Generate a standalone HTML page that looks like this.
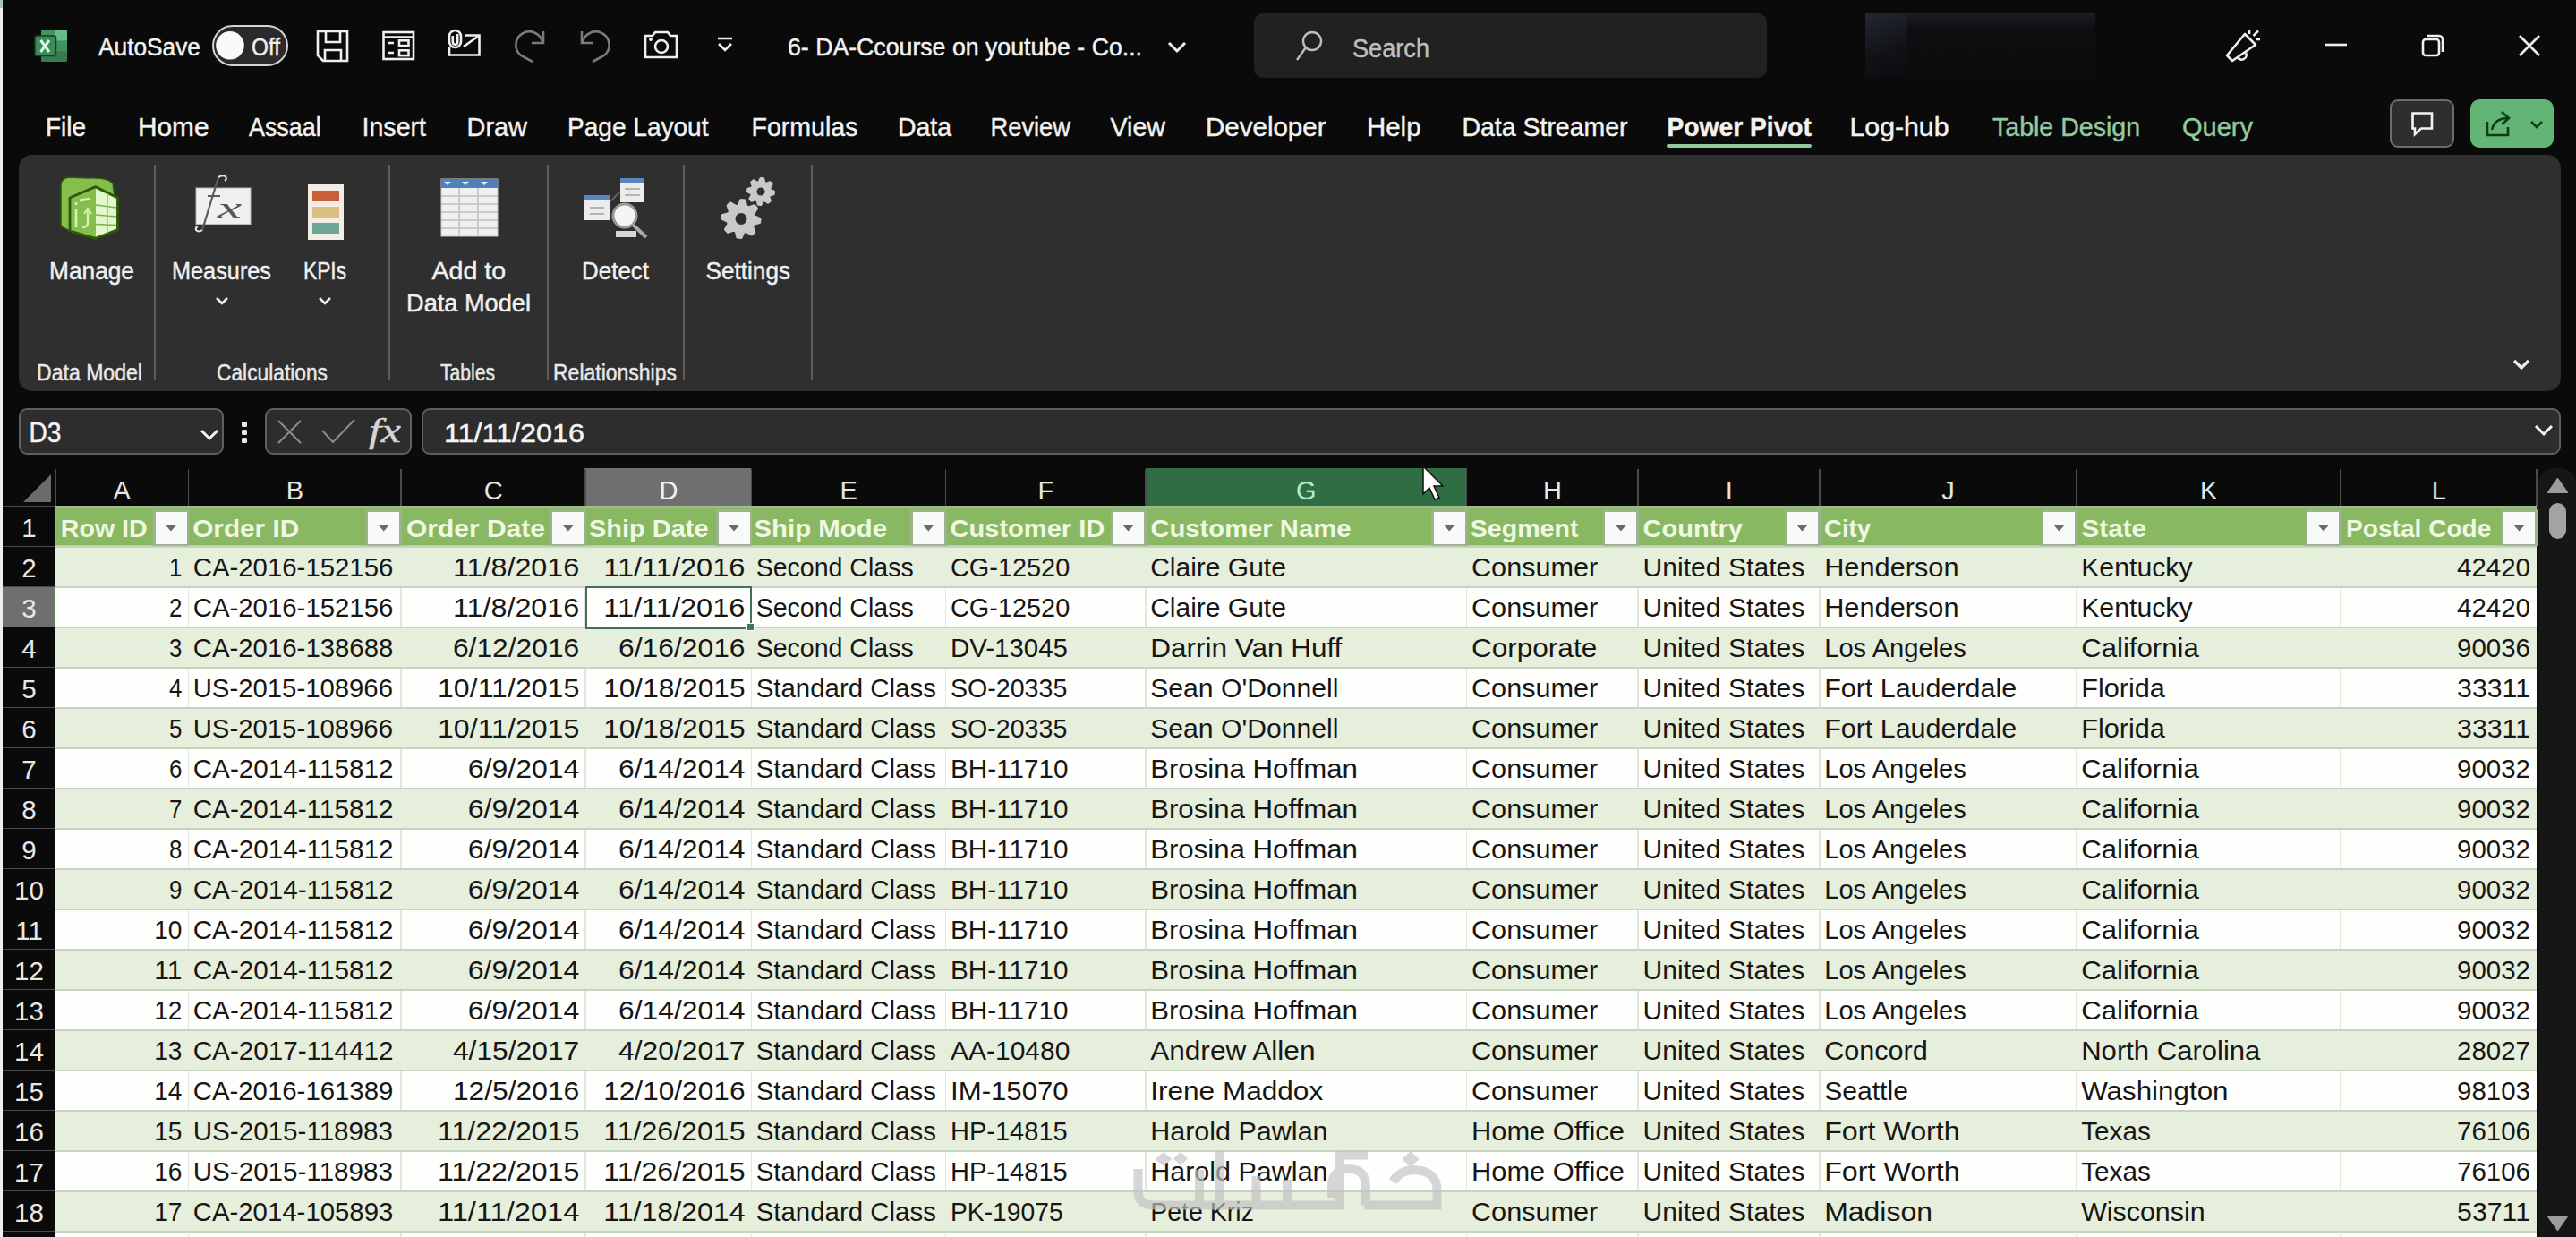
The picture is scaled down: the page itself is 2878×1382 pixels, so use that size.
<!DOCTYPE html>
<html><head><meta charset="utf-8"><title>Excel - Power Pivot</title>
<style>
html,body{margin:0;padding:0;background:#0a0a0a;}
body{width:2878px;height:1382px;position:relative;overflow:hidden;font-family:"Liberation Sans",sans-serif;}
svg text{font-family:"Liberation Sans",sans-serif;}
</style></head><body>
<div style="position:absolute;left:0px;top:0px;width:3px;height:1382px;background:#eeeeee"></div><div style="position:absolute;left:0px;top:0px;width:3px;height:9px;background:#a9c3cb"></div><div style="position:absolute;left:237px;top:28px;width:85px;height:46px;box-sizing:border-box;border:2.5px solid #d4d4d4;border-radius:23px;background:#2a2a2a"></div><div style="position:absolute;left:1401px;top:15px;width:573px;height:72px;background:#212121;border-radius:10px"></div><div style="position:absolute;left:2084px;top:15px;width:47px;height:72px;background:linear-gradient(160deg,#2a2e38 0%,#12141a 60%,#0c0c0e 100%);opacity:.8"></div><div style="position:absolute;left:2131px;top:15px;width:210px;height:72px;background:linear-gradient(180deg,#1d1e22 0%,#0f0f11 22%,#0b0b0c 100%)"></div><div style="position:absolute;left:1862px;top:161px;width:162px;height:4px;background:#90c89c;border-radius:2px"></div><div style="position:absolute;left:2670px;top:111px;width:72px;height:54px;box-sizing:border-box;border:2px solid #6c6c6c;border-radius:9px;background:#2e2e2e"></div><div style="position:absolute;left:2760px;top:111px;width:93px;height:54px;background:#63b575;border-radius:10px"></div><div style="position:absolute;left:21px;top:173px;width:2840px;height:264px;background:#2f2f2f;border-radius:15px"></div><div style="position:absolute;left:172px;top:184px;width:2px;height:240px;background:#5c5c5c"></div><div style="position:absolute;left:434px;top:184px;width:2px;height:240px;background:#5c5c5c"></div><div style="position:absolute;left:611px;top:184px;width:2px;height:240px;background:#5c5c5c"></div><div style="position:absolute;left:762.5px;top:184px;width:2px;height:240px;background:#5c5c5c"></div><div style="position:absolute;left:906px;top:184px;width:2px;height:240px;background:#5c5c5c"></div><div style="position:absolute;left:21px;top:456px;width:229px;height:52px;box-sizing:border-box;border:2px solid #5f5f5f;border-radius:9px;background:#2d2d2d"></div><div style="position:absolute;left:269.5px;top:471px;width:6.5px;height:6px;background:#e8e8e8;border-radius:1.5px"></div><div style="position:absolute;left:269.5px;top:480px;width:6.5px;height:6px;background:#e8e8e8;border-radius:1.5px"></div><div style="position:absolute;left:269.5px;top:488.5px;width:6.5px;height:6px;background:#e8e8e8;border-radius:1.5px"></div><div style="position:absolute;left:295.5px;top:456px;width:164px;height:52px;box-sizing:border-box;border:2px solid #5f5f5f;border-radius:9px;background:#2d2d2d"></div><div style="position:absolute;left:470.5px;top:456px;width:2390.5px;height:52px;box-sizing:border-box;border:2px solid #5f5f5f;border-radius:9px;background:#2d2d2d"></div><div style="position:absolute;left:653px;top:523px;width:186px;height:42.5px;background:#6f6f6f"></div><div style="position:absolute;left:653px;top:563.5px;width:186px;height:2px;background:#4f8a5f"></div><div style="position:absolute;left:1280px;top:523px;width:359px;height:42.5px;background:#2f6e45"></div><div style="position:absolute;left:61px;top:524px;width:1.5px;height:41.5px;background:#4a4a4a"></div><div style="position:absolute;left:209.5px;top:524px;width:1.5px;height:41.5px;background:#4a4a4a"></div><div style="position:absolute;left:447.2px;top:524px;width:1.5px;height:41.5px;background:#4a4a4a"></div><div style="position:absolute;left:653.3px;top:524px;width:1.5px;height:41.5px;background:#4a4a4a"></div><div style="position:absolute;left:838.5px;top:524px;width:1.5px;height:41.5px;background:#4a4a4a"></div><div style="position:absolute;left:1055.8px;top:524px;width:1.5px;height:41.5px;background:#4a4a4a"></div><div style="position:absolute;left:1279px;top:524px;width:1.5px;height:41.5px;background:#4a4a4a"></div><div style="position:absolute;left:1637.8px;top:524px;width:1.5px;height:41.5px;background:#4a4a4a"></div><div style="position:absolute;left:1829.4px;top:524px;width:1.5px;height:41.5px;background:#4a4a4a"></div><div style="position:absolute;left:2032px;top:524px;width:1.5px;height:41.5px;background:#4a4a4a"></div><div style="position:absolute;left:2319px;top:524px;width:1.5px;height:41.5px;background:#4a4a4a"></div><div style="position:absolute;left:2614.4px;top:524px;width:1.5px;height:41.5px;background:#4a4a4a"></div><div style="position:absolute;left:2833px;top:524px;width:1.5px;height:41.5px;background:#4a4a4a"></div><div style="position:absolute;left:3px;top:564.75px;width:59px;height:1.6px;background:#4a4a4a"></div><div style="position:absolute;left:3px;top:609.75px;width:59px;height:1.6px;background:#4a4a4a"></div><div style="position:absolute;left:3px;top:655.5px;width:59px;height:45px;background:#6f6f6f"></div><div style="position:absolute;left:59px;top:655.5px;width:3px;height:45px;background:#4f8a5f"></div><div style="position:absolute;left:3px;top:654.75px;width:59px;height:1.6px;background:#4a4a4a"></div><div style="position:absolute;left:3px;top:699.75px;width:59px;height:1.6px;background:#4a4a4a"></div><div style="position:absolute;left:3px;top:744.75px;width:59px;height:1.6px;background:#4a4a4a"></div><div style="position:absolute;left:3px;top:789.75px;width:59px;height:1.6px;background:#4a4a4a"></div><div style="position:absolute;left:3px;top:834.75px;width:59px;height:1.6px;background:#4a4a4a"></div><div style="position:absolute;left:3px;top:879.75px;width:59px;height:1.6px;background:#4a4a4a"></div><div style="position:absolute;left:3px;top:924.75px;width:59px;height:1.6px;background:#4a4a4a"></div><div style="position:absolute;left:3px;top:969.75px;width:59px;height:1.6px;background:#4a4a4a"></div><div style="position:absolute;left:3px;top:1014.75px;width:59px;height:1.6px;background:#4a4a4a"></div><div style="position:absolute;left:3px;top:1059.75px;width:59px;height:1.6px;background:#4a4a4a"></div><div style="position:absolute;left:3px;top:1104.75px;width:59px;height:1.6px;background:#4a4a4a"></div><div style="position:absolute;left:3px;top:1149.75px;width:59px;height:1.6px;background:#4a4a4a"></div><div style="position:absolute;left:3px;top:1194.75px;width:59px;height:1.6px;background:#4a4a4a"></div><div style="position:absolute;left:3px;top:1239.75px;width:59px;height:1.6px;background:#4a4a4a"></div><div style="position:absolute;left:3px;top:1284.75px;width:59px;height:1.6px;background:#4a4a4a"></div><div style="position:absolute;left:3px;top:1329.75px;width:59px;height:1.6px;background:#4a4a4a"></div><div style="position:absolute;left:3px;top:1374.75px;width:59px;height:1.6px;background:#4a4a4a"></div><div style="position:absolute;left:62px;top:565.5px;width:2772px;height:45px;background:#88b862"></div><div style="position:absolute;left:62px;top:565.0px;width:2772px;height:3px;background:#9ebb8b"></div><div style="position:absolute;left:62px;top:609.0px;width:2772px;height:2px;background:#b4cfa0"></div><div style="position:absolute;left:61.25px;top:565.5px;width:1.5px;height:45px;background:#98b585"></div><div style="position:absolute;left:209.75px;top:565.5px;width:1.5px;height:45px;background:#98b585"></div><div style="position:absolute;left:447.45px;top:565.5px;width:1.5px;height:45px;background:#98b585"></div><div style="position:absolute;left:653.55px;top:565.5px;width:1.5px;height:45px;background:#98b585"></div><div style="position:absolute;left:838.75px;top:565.5px;width:1.5px;height:45px;background:#98b585"></div><div style="position:absolute;left:1056.05px;top:565.5px;width:1.5px;height:45px;background:#98b585"></div><div style="position:absolute;left:1279.25px;top:565.5px;width:1.5px;height:45px;background:#98b585"></div><div style="position:absolute;left:1638.05px;top:565.5px;width:1.5px;height:45px;background:#98b585"></div><div style="position:absolute;left:1829.65px;top:565.5px;width:1.5px;height:45px;background:#98b585"></div><div style="position:absolute;left:2032.25px;top:565.5px;width:1.5px;height:45px;background:#98b585"></div><div style="position:absolute;left:2319.25px;top:565.5px;width:1.5px;height:45px;background:#98b585"></div><div style="position:absolute;left:2614.65px;top:565.5px;width:1.5px;height:45px;background:#98b585"></div><div style="position:absolute;left:62px;top:610.5px;width:2772px;height:45px;background:#e6eedc"></div><div style="position:absolute;left:62px;top:609.75px;width:2772px;height:1.75px;background:#c9d2c0"></div><div style="position:absolute;left:62px;top:655.5px;width:2772px;height:45px;background:#fefffd"></div><div style="position:absolute;left:62px;top:654.75px;width:2772px;height:1.75px;background:#c9d2c0"></div><div style="position:absolute;left:209.5px;top:656.5px;width:1.5px;height:44px;background:#e2e6df"></div><div style="position:absolute;left:447.2px;top:656.5px;width:1.5px;height:44px;background:#e2e6df"></div><div style="position:absolute;left:653.3px;top:656.5px;width:1.5px;height:44px;background:#e2e6df"></div><div style="position:absolute;left:838.5px;top:656.5px;width:1.5px;height:44px;background:#e2e6df"></div><div style="position:absolute;left:1055.8px;top:656.5px;width:1.5px;height:44px;background:#e2e6df"></div><div style="position:absolute;left:1279px;top:656.5px;width:1.5px;height:44px;background:#e2e6df"></div><div style="position:absolute;left:1637.8px;top:656.5px;width:1.5px;height:44px;background:#e2e6df"></div><div style="position:absolute;left:1829.4px;top:656.5px;width:1.5px;height:44px;background:#e2e6df"></div><div style="position:absolute;left:2032px;top:656.5px;width:1.5px;height:44px;background:#e2e6df"></div><div style="position:absolute;left:2319px;top:656.5px;width:1.5px;height:44px;background:#e2e6df"></div><div style="position:absolute;left:2614.4px;top:656.5px;width:1.5px;height:44px;background:#e2e6df"></div><div style="position:absolute;left:62px;top:700.5px;width:2772px;height:45px;background:#e6eedc"></div><div style="position:absolute;left:62px;top:699.75px;width:2772px;height:1.75px;background:#c9d2c0"></div><div style="position:absolute;left:62px;top:745.5px;width:2772px;height:45px;background:#fefffd"></div><div style="position:absolute;left:62px;top:744.75px;width:2772px;height:1.75px;background:#c9d2c0"></div><div style="position:absolute;left:209.5px;top:746.5px;width:1.5px;height:44px;background:#e2e6df"></div><div style="position:absolute;left:447.2px;top:746.5px;width:1.5px;height:44px;background:#e2e6df"></div><div style="position:absolute;left:653.3px;top:746.5px;width:1.5px;height:44px;background:#e2e6df"></div><div style="position:absolute;left:838.5px;top:746.5px;width:1.5px;height:44px;background:#e2e6df"></div><div style="position:absolute;left:1055.8px;top:746.5px;width:1.5px;height:44px;background:#e2e6df"></div><div style="position:absolute;left:1279px;top:746.5px;width:1.5px;height:44px;background:#e2e6df"></div><div style="position:absolute;left:1637.8px;top:746.5px;width:1.5px;height:44px;background:#e2e6df"></div><div style="position:absolute;left:1829.4px;top:746.5px;width:1.5px;height:44px;background:#e2e6df"></div><div style="position:absolute;left:2032px;top:746.5px;width:1.5px;height:44px;background:#e2e6df"></div><div style="position:absolute;left:2319px;top:746.5px;width:1.5px;height:44px;background:#e2e6df"></div><div style="position:absolute;left:2614.4px;top:746.5px;width:1.5px;height:44px;background:#e2e6df"></div><div style="position:absolute;left:62px;top:790.5px;width:2772px;height:45px;background:#e6eedc"></div><div style="position:absolute;left:62px;top:789.75px;width:2772px;height:1.75px;background:#c9d2c0"></div><div style="position:absolute;left:62px;top:835.5px;width:2772px;height:45px;background:#fefffd"></div><div style="position:absolute;left:62px;top:834.75px;width:2772px;height:1.75px;background:#c9d2c0"></div><div style="position:absolute;left:209.5px;top:836.5px;width:1.5px;height:44px;background:#e2e6df"></div><div style="position:absolute;left:447.2px;top:836.5px;width:1.5px;height:44px;background:#e2e6df"></div><div style="position:absolute;left:653.3px;top:836.5px;width:1.5px;height:44px;background:#e2e6df"></div><div style="position:absolute;left:838.5px;top:836.5px;width:1.5px;height:44px;background:#e2e6df"></div><div style="position:absolute;left:1055.8px;top:836.5px;width:1.5px;height:44px;background:#e2e6df"></div><div style="position:absolute;left:1279px;top:836.5px;width:1.5px;height:44px;background:#e2e6df"></div><div style="position:absolute;left:1637.8px;top:836.5px;width:1.5px;height:44px;background:#e2e6df"></div><div style="position:absolute;left:1829.4px;top:836.5px;width:1.5px;height:44px;background:#e2e6df"></div><div style="position:absolute;left:2032px;top:836.5px;width:1.5px;height:44px;background:#e2e6df"></div><div style="position:absolute;left:2319px;top:836.5px;width:1.5px;height:44px;background:#e2e6df"></div><div style="position:absolute;left:2614.4px;top:836.5px;width:1.5px;height:44px;background:#e2e6df"></div><div style="position:absolute;left:62px;top:880.5px;width:2772px;height:45px;background:#e6eedc"></div><div style="position:absolute;left:62px;top:879.75px;width:2772px;height:1.75px;background:#c9d2c0"></div><div style="position:absolute;left:62px;top:925.5px;width:2772px;height:45px;background:#fefffd"></div><div style="position:absolute;left:62px;top:924.75px;width:2772px;height:1.75px;background:#c9d2c0"></div><div style="position:absolute;left:209.5px;top:926.5px;width:1.5px;height:44px;background:#e2e6df"></div><div style="position:absolute;left:447.2px;top:926.5px;width:1.5px;height:44px;background:#e2e6df"></div><div style="position:absolute;left:653.3px;top:926.5px;width:1.5px;height:44px;background:#e2e6df"></div><div style="position:absolute;left:838.5px;top:926.5px;width:1.5px;height:44px;background:#e2e6df"></div><div style="position:absolute;left:1055.8px;top:926.5px;width:1.5px;height:44px;background:#e2e6df"></div><div style="position:absolute;left:1279px;top:926.5px;width:1.5px;height:44px;background:#e2e6df"></div><div style="position:absolute;left:1637.8px;top:926.5px;width:1.5px;height:44px;background:#e2e6df"></div><div style="position:absolute;left:1829.4px;top:926.5px;width:1.5px;height:44px;background:#e2e6df"></div><div style="position:absolute;left:2032px;top:926.5px;width:1.5px;height:44px;background:#e2e6df"></div><div style="position:absolute;left:2319px;top:926.5px;width:1.5px;height:44px;background:#e2e6df"></div><div style="position:absolute;left:2614.4px;top:926.5px;width:1.5px;height:44px;background:#e2e6df"></div><div style="position:absolute;left:62px;top:970.5px;width:2772px;height:45px;background:#e6eedc"></div><div style="position:absolute;left:62px;top:969.75px;width:2772px;height:1.75px;background:#c9d2c0"></div><div style="position:absolute;left:62px;top:1015.5px;width:2772px;height:45px;background:#fefffd"></div><div style="position:absolute;left:62px;top:1014.75px;width:2772px;height:1.75px;background:#c9d2c0"></div><div style="position:absolute;left:209.5px;top:1016.5px;width:1.5px;height:44px;background:#e2e6df"></div><div style="position:absolute;left:447.2px;top:1016.5px;width:1.5px;height:44px;background:#e2e6df"></div><div style="position:absolute;left:653.3px;top:1016.5px;width:1.5px;height:44px;background:#e2e6df"></div><div style="position:absolute;left:838.5px;top:1016.5px;width:1.5px;height:44px;background:#e2e6df"></div><div style="position:absolute;left:1055.8px;top:1016.5px;width:1.5px;height:44px;background:#e2e6df"></div><div style="position:absolute;left:1279px;top:1016.5px;width:1.5px;height:44px;background:#e2e6df"></div><div style="position:absolute;left:1637.8px;top:1016.5px;width:1.5px;height:44px;background:#e2e6df"></div><div style="position:absolute;left:1829.4px;top:1016.5px;width:1.5px;height:44px;background:#e2e6df"></div><div style="position:absolute;left:2032px;top:1016.5px;width:1.5px;height:44px;background:#e2e6df"></div><div style="position:absolute;left:2319px;top:1016.5px;width:1.5px;height:44px;background:#e2e6df"></div><div style="position:absolute;left:2614.4px;top:1016.5px;width:1.5px;height:44px;background:#e2e6df"></div><div style="position:absolute;left:62px;top:1060.5px;width:2772px;height:45px;background:#e6eedc"></div><div style="position:absolute;left:62px;top:1059.75px;width:2772px;height:1.75px;background:#c9d2c0"></div><div style="position:absolute;left:62px;top:1105.5px;width:2772px;height:45px;background:#fefffd"></div><div style="position:absolute;left:62px;top:1104.75px;width:2772px;height:1.75px;background:#c9d2c0"></div><div style="position:absolute;left:209.5px;top:1106.5px;width:1.5px;height:44px;background:#e2e6df"></div><div style="position:absolute;left:447.2px;top:1106.5px;width:1.5px;height:44px;background:#e2e6df"></div><div style="position:absolute;left:653.3px;top:1106.5px;width:1.5px;height:44px;background:#e2e6df"></div><div style="position:absolute;left:838.5px;top:1106.5px;width:1.5px;height:44px;background:#e2e6df"></div><div style="position:absolute;left:1055.8px;top:1106.5px;width:1.5px;height:44px;background:#e2e6df"></div><div style="position:absolute;left:1279px;top:1106.5px;width:1.5px;height:44px;background:#e2e6df"></div><div style="position:absolute;left:1637.8px;top:1106.5px;width:1.5px;height:44px;background:#e2e6df"></div><div style="position:absolute;left:1829.4px;top:1106.5px;width:1.5px;height:44px;background:#e2e6df"></div><div style="position:absolute;left:2032px;top:1106.5px;width:1.5px;height:44px;background:#e2e6df"></div><div style="position:absolute;left:2319px;top:1106.5px;width:1.5px;height:44px;background:#e2e6df"></div><div style="position:absolute;left:2614.4px;top:1106.5px;width:1.5px;height:44px;background:#e2e6df"></div><div style="position:absolute;left:62px;top:1150.5px;width:2772px;height:45px;background:#e6eedc"></div><div style="position:absolute;left:62px;top:1149.75px;width:2772px;height:1.75px;background:#c9d2c0"></div><div style="position:absolute;left:62px;top:1195.5px;width:2772px;height:45px;background:#fefffd"></div><div style="position:absolute;left:62px;top:1194.75px;width:2772px;height:1.75px;background:#c9d2c0"></div><div style="position:absolute;left:209.5px;top:1196.5px;width:1.5px;height:44px;background:#e2e6df"></div><div style="position:absolute;left:447.2px;top:1196.5px;width:1.5px;height:44px;background:#e2e6df"></div><div style="position:absolute;left:653.3px;top:1196.5px;width:1.5px;height:44px;background:#e2e6df"></div><div style="position:absolute;left:838.5px;top:1196.5px;width:1.5px;height:44px;background:#e2e6df"></div><div style="position:absolute;left:1055.8px;top:1196.5px;width:1.5px;height:44px;background:#e2e6df"></div><div style="position:absolute;left:1279px;top:1196.5px;width:1.5px;height:44px;background:#e2e6df"></div><div style="position:absolute;left:1637.8px;top:1196.5px;width:1.5px;height:44px;background:#e2e6df"></div><div style="position:absolute;left:1829.4px;top:1196.5px;width:1.5px;height:44px;background:#e2e6df"></div><div style="position:absolute;left:2032px;top:1196.5px;width:1.5px;height:44px;background:#e2e6df"></div><div style="position:absolute;left:2319px;top:1196.5px;width:1.5px;height:44px;background:#e2e6df"></div><div style="position:absolute;left:2614.4px;top:1196.5px;width:1.5px;height:44px;background:#e2e6df"></div><div style="position:absolute;left:62px;top:1240.5px;width:2772px;height:45px;background:#e6eedc"></div><div style="position:absolute;left:62px;top:1239.75px;width:2772px;height:1.75px;background:#c9d2c0"></div><div style="position:absolute;left:62px;top:1285.5px;width:2772px;height:45px;background:#fefffd"></div><div style="position:absolute;left:62px;top:1284.75px;width:2772px;height:1.75px;background:#c9d2c0"></div><div style="position:absolute;left:209.5px;top:1286.5px;width:1.5px;height:44px;background:#e2e6df"></div><div style="position:absolute;left:447.2px;top:1286.5px;width:1.5px;height:44px;background:#e2e6df"></div><div style="position:absolute;left:653.3px;top:1286.5px;width:1.5px;height:44px;background:#e2e6df"></div><div style="position:absolute;left:838.5px;top:1286.5px;width:1.5px;height:44px;background:#e2e6df"></div><div style="position:absolute;left:1055.8px;top:1286.5px;width:1.5px;height:44px;background:#e2e6df"></div><div style="position:absolute;left:1279px;top:1286.5px;width:1.5px;height:44px;background:#e2e6df"></div><div style="position:absolute;left:1637.8px;top:1286.5px;width:1.5px;height:44px;background:#e2e6df"></div><div style="position:absolute;left:1829.4px;top:1286.5px;width:1.5px;height:44px;background:#e2e6df"></div><div style="position:absolute;left:2032px;top:1286.5px;width:1.5px;height:44px;background:#e2e6df"></div><div style="position:absolute;left:2319px;top:1286.5px;width:1.5px;height:44px;background:#e2e6df"></div><div style="position:absolute;left:2614.4px;top:1286.5px;width:1.5px;height:44px;background:#e2e6df"></div><div style="position:absolute;left:62px;top:1330.5px;width:2772px;height:45px;background:#e6eedc"></div><div style="position:absolute;left:62px;top:1329.75px;width:2772px;height:1.75px;background:#c9d2c0"></div><div style="position:absolute;left:62px;top:1375.5px;width:2772px;height:45px;background:#fefffd"></div><div style="position:absolute;left:62px;top:1374.75px;width:2772px;height:1.75px;background:#c9d2c0"></div><div style="position:absolute;left:209.5px;top:1376.5px;width:1.5px;height:44px;background:#e2e6df"></div><div style="position:absolute;left:447.2px;top:1376.5px;width:1.5px;height:44px;background:#e2e6df"></div><div style="position:absolute;left:653.3px;top:1376.5px;width:1.5px;height:44px;background:#e2e6df"></div><div style="position:absolute;left:838.5px;top:1376.5px;width:1.5px;height:44px;background:#e2e6df"></div><div style="position:absolute;left:1055.8px;top:1376.5px;width:1.5px;height:44px;background:#e2e6df"></div><div style="position:absolute;left:1279px;top:1376.5px;width:1.5px;height:44px;background:#e2e6df"></div><div style="position:absolute;left:1637.8px;top:1376.5px;width:1.5px;height:44px;background:#e2e6df"></div><div style="position:absolute;left:1829.4px;top:1376.5px;width:1.5px;height:44px;background:#e2e6df"></div><div style="position:absolute;left:2032px;top:1376.5px;width:1.5px;height:44px;background:#e2e6df"></div><div style="position:absolute;left:2319px;top:1376.5px;width:1.5px;height:44px;background:#e2e6df"></div><div style="position:absolute;left:2614.4px;top:1376.5px;width:1.5px;height:44px;background:#e2e6df"></div><div style="position:absolute;left:171.0px;top:568.5px;width:40px;height:41.5px;background:#9db290"></div><div style="position:absolute;left:173.5px;top:572px;width:35px;height:35.5px;background:#f8faf7"></div><div style="position:absolute;left:408.7px;top:568.5px;width:40px;height:41.5px;background:#9db290"></div><div style="position:absolute;left:411.2px;top:572px;width:35px;height:35.5px;background:#f8faf7"></div><div style="position:absolute;left:614.8px;top:568.5px;width:40px;height:41.5px;background:#9db290"></div><div style="position:absolute;left:617.3px;top:572px;width:35px;height:35.5px;background:#f8faf7"></div><div style="position:absolute;left:800.0px;top:568.5px;width:40px;height:41.5px;background:#9db290"></div><div style="position:absolute;left:802.5px;top:572px;width:35px;height:35.5px;background:#f8faf7"></div><div style="position:absolute;left:1017.3px;top:568.5px;width:40px;height:41.5px;background:#9db290"></div><div style="position:absolute;left:1019.8px;top:572px;width:35px;height:35.5px;background:#f8faf7"></div><div style="position:absolute;left:1240.5px;top:568.5px;width:40px;height:41.5px;background:#9db290"></div><div style="position:absolute;left:1243px;top:572px;width:35px;height:35.5px;background:#f8faf7"></div><div style="position:absolute;left:1599.3px;top:568.5px;width:40px;height:41.5px;background:#9db290"></div><div style="position:absolute;left:1601.8px;top:572px;width:35px;height:35.5px;background:#f8faf7"></div><div style="position:absolute;left:1790.9px;top:568.5px;width:40px;height:41.5px;background:#9db290"></div><div style="position:absolute;left:1793.4px;top:572px;width:35px;height:35.5px;background:#f8faf7"></div><div style="position:absolute;left:1993.5px;top:568.5px;width:40px;height:41.5px;background:#9db290"></div><div style="position:absolute;left:1996px;top:572px;width:35px;height:35.5px;background:#f8faf7"></div><div style="position:absolute;left:2280.5px;top:568.5px;width:40px;height:41.5px;background:#9db290"></div><div style="position:absolute;left:2283px;top:572px;width:35px;height:35.5px;background:#f8faf7"></div><div style="position:absolute;left:2575.9px;top:568.5px;width:40px;height:41.5px;background:#9db290"></div><div style="position:absolute;left:2578.4px;top:572px;width:35px;height:35.5px;background:#f8faf7"></div><div style="position:absolute;left:2794.5px;top:568.5px;width:40px;height:41.5px;background:#9db290"></div><div style="position:absolute;left:2797px;top:572px;width:35px;height:35.5px;background:#f8faf7"></div><div style="position:absolute;left:653.5px;top:654.5px;width:186.5px;height:48px;box-sizing:border-box;border:2.5px solid #44705a"></div><div style="position:absolute;left:835px;top:697px;width:6.5px;height:6.5px;background:#3f7a55;outline:1px solid #fff"></div><div style="position:absolute;left:2836px;top:523px;width:42px;height:859px;background:#161616;border-radius:18px 18px 0 0"></div><div style="position:absolute;left:2848px;top:562px;width:19px;height:40px;background:#a3a3a3;border-radius:10px"></div>
<svg width="2878" height="1382" viewBox="0 0 2878 1382" style="position:absolute;left:0;top:0">
<g>
<rect x="46" y="33.5" width="29" height="35.5" rx="2" fill="#43925f"/>
<rect x="61" y="33.5" width="14" height="12" rx="2" fill="#66bb8c"/>
<rect x="46" y="57" width="29" height="12" rx="2" fill="#3a7c52"/>
<rect x="39" y="40" width="23.5" height="22.5" rx="2.5" fill="#3b8a57" stroke="#16421f" stroke-width="1.5"/>
<path d="M45.5 45 L55 58 M55 45 L45.5 58" stroke="#dcf7e4" stroke-width="3"/>
</g>
<text x="110" y="62" font-size="27" fill="#f2f2f2" textLength="114" lengthAdjust="spacingAndGlyphs" stroke="#f2f2f2" stroke-width="0.45" >AutoSave</text>
<circle cx="257" cy="50.8" r="15.8" fill="#fafafa"/>
<text x="281" y="62" font-size="27" fill="#f0f0f0" textLength="32" lengthAdjust="spacingAndGlyphs" stroke="#f0f0f0" stroke-width="0.45" >Off</text>
<g fill="none" stroke="#f0f0f0" stroke-width="2.6">
<path d="M355 35 H388 V68 H361 L355 62 Z"/>
<path d="M364 35 V47 H380 V35"/>
<path d="M363 68 V56 H381 V68"/>
<rect x="428.5" y="36" width="33.5" height="30"/>
<path d="M429 41.5 H461.5"/>
<path d="M434 48 H440 M434 59 H440"/>
<rect x="446" y="45.3" width="10.5" height="5.8"/>
<rect x="446" y="56.3" width="10.5" height="5.8"/>
<path d="M502 53 V61.5 H535.5 V39.5 H519"/>
<path d="M518 52 L535 40"/>
<rect x="502" y="34" width="13" height="19" rx="6.5"/>
<path d="M505.8 40 V47 a2.7 2.7 0 0 0 5.4 0 V38"/>
</g>
<g fill="none" stroke="#7a7a7a" stroke-width="2.6">
<path d="M607 35 V48 H594"/>
<path d="M606 47 A15 15 0 1 0 582 62 L595 69"/>
<path d="M650 35 V48 H663"/>
<path d="M651 47 A15 15 0 1 1 675 62 L662 69"/>
</g>
<g fill="none" stroke="#f0f0f0" stroke-width="2.6">
<path d="M721 40 H729 L732 36 H746 L749 40 H756 V64 H721 Z"/>
<circle cx="739" cy="52" r="7"/>
</g>
<circle cx="727" cy="44" r="2" fill="#f0f0f0"/>
<path d="M802 43 H818 M803 49 L810 56 L817 49" fill="none" stroke="#f0f0f0" stroke-width="2.6"/>

<text x="880" y="62" font-size="28" fill="#f2f2f2" textLength="396" lengthAdjust="spacingAndGlyphs" stroke="#f2f2f2" stroke-width="0.45" >6- DA-Ccourse on youtube - Co...</text>
<path d="M1306 48 L1315 57 L1324 48" fill="none" stroke="#f2f2f2" stroke-width="3"/>
<g fill="none" stroke="#bdbdbd" stroke-width="2.4"><circle cx="1466" cy="46" r="10"/><path d="M1459 53 L1449 67"/></g>
<text x="1511" y="64" font-size="29" fill="#bfbfbf" textLength="86" lengthAdjust="spacingAndGlyphs" stroke="#bfbfbf" stroke-width="0.45" >Search</text>
<g fill="none" stroke="#f0f0f0" stroke-width="2.6" stroke-linejoin="round">
<path d="M2508 38 L2520 50 L2494 68 L2488 62 Z"/>
<path d="M2500 64 a5 5 0 0 0 9 -5"/>
<path d="M2513 33 V38 M2517.5 40 L2523 34.5 M2520.5 44 H2525"/>
<path d="M2598 50 H2622"/>
<rect x="2707" y="44" width="18" height="18" rx="3"/>
<path d="M2711 40 H2725 a4 4 0 0 1 4 4 V58"/>
<path d="M2815 40 L2837 62 M2837 40 L2815 62"/>
</g>
<text x="51" y="152" font-size="29.5" fill="#f2f2f2" textLength="45" lengthAdjust="spacingAndGlyphs" stroke="#f2f2f2" stroke-width="0.45" >File</text>
<text x="154" y="152" font-size="29.5" fill="#f2f2f2" textLength="79.5" lengthAdjust="spacingAndGlyphs" stroke="#f2f2f2" stroke-width="0.45" >Home</text>
<text x="278" y="152" font-size="29.5" fill="#f2f2f2" textLength="80.6" lengthAdjust="spacingAndGlyphs" stroke="#f2f2f2" stroke-width="0.45" >Assaal</text>
<text x="404.5" y="152" font-size="29.5" fill="#f2f2f2" textLength="71.5" lengthAdjust="spacingAndGlyphs" stroke="#f2f2f2" stroke-width="0.45" >Insert</text>
<text x="521.5" y="152" font-size="29.5" fill="#f2f2f2" textLength="67.5" lengthAdjust="spacingAndGlyphs" stroke="#f2f2f2" stroke-width="0.45" >Draw</text>
<text x="634" y="152" font-size="29.5" fill="#f2f2f2" textLength="157.5" lengthAdjust="spacingAndGlyphs" stroke="#f2f2f2" stroke-width="0.45" >Page Layout</text>
<text x="839.5" y="152" font-size="29.5" fill="#f2f2f2" textLength="119.0" lengthAdjust="spacingAndGlyphs" stroke="#f2f2f2" stroke-width="0.45" >Formulas</text>
<text x="1003" y="152" font-size="29.5" fill="#f2f2f2" textLength="60" lengthAdjust="spacingAndGlyphs" stroke="#f2f2f2" stroke-width="0.45" >Data</text>
<text x="1106.5" y="152" font-size="29.5" fill="#f2f2f2" textLength="89.5" lengthAdjust="spacingAndGlyphs" stroke="#f2f2f2" stroke-width="0.45" >Review</text>
<text x="1240.5" y="152" font-size="29.5" fill="#f2f2f2" textLength="61.5" lengthAdjust="spacingAndGlyphs" stroke="#f2f2f2" stroke-width="0.45" >View</text>
<text x="1347" y="152" font-size="29.5" fill="#f2f2f2" textLength="134.5" lengthAdjust="spacingAndGlyphs" stroke="#f2f2f2" stroke-width="0.45" >Developer</text>
<text x="1527" y="152" font-size="29.5" fill="#f2f2f2" textLength="60.5" lengthAdjust="spacingAndGlyphs" stroke="#f2f2f2" stroke-width="0.45" >Help</text>
<text x="1633.5" y="152" font-size="29.5" fill="#f2f2f2" textLength="185.0" lengthAdjust="spacingAndGlyphs" stroke="#f2f2f2" stroke-width="0.45" >Data Streamer</text>
<text x="1862.5" y="152" font-size="29.5" fill="#f2f2f2" font-weight="bold" textLength="161.5" lengthAdjust="spacingAndGlyphs" stroke="#f2f2f2" stroke-width="0.45" >Power Pivot</text>
<text x="2066.5" y="152" font-size="29.5" fill="#f2f2f2" textLength="111.0" lengthAdjust="spacingAndGlyphs" stroke="#f2f2f2" stroke-width="0.45" >Log-hub</text>
<text x="2226" y="152" font-size="29.5" fill="#93c9a0" textLength="165" lengthAdjust="spacingAndGlyphs" stroke="#93c9a0" stroke-width="0.45" >Table Design</text>
<text x="2438" y="152" font-size="29.5" fill="#93c9a0" textLength="79" lengthAdjust="spacingAndGlyphs" stroke="#93c9a0" stroke-width="0.45" >Query</text>
<path d="M2695.5 126.5 H2717 V143.5 H2705 L2698 150 V143.5 H2695.5 Z" fill="none" stroke="#f4f4f4" stroke-width="2.6" stroke-linejoin="miter"/>
<g fill="none" stroke="#0d3d17" stroke-width="2.6">
<path d="M2779 136 V151 H2802 V142"/>
<path d="M2784 145 C2786 136 2792 132 2802 132 M2795 125 L2803 132 L2795 139"/>
<path d="M2828 136 L2834 142 L2840 136"/>
</g>
<text x="55" y="312" font-size="27" fill="#f0f0f0" textLength="95" lengthAdjust="spacingAndGlyphs" stroke="#f0f0f0" stroke-width="0.45" >Manage</text>
<text x="192" y="312" font-size="27" fill="#f0f0f0" textLength="111" lengthAdjust="spacingAndGlyphs" stroke="#f0f0f0" stroke-width="0.45" >Measures</text>
<text x="339" y="312" font-size="27" fill="#f0f0f0" textLength="48" lengthAdjust="spacingAndGlyphs" stroke="#f0f0f0" stroke-width="0.45" >KPIs</text>
<text x="482.5" y="312" font-size="27" fill="#f0f0f0" textLength="82.5" lengthAdjust="spacingAndGlyphs" stroke="#f0f0f0" stroke-width="0.45" >Add to</text>
<text x="454" y="348" font-size="27" fill="#f0f0f0" textLength="139" lengthAdjust="spacingAndGlyphs" stroke="#f0f0f0" stroke-width="0.45" >Data Model</text>
<text x="650" y="312" font-size="27" fill="#f0f0f0" textLength="75" lengthAdjust="spacingAndGlyphs" stroke="#f0f0f0" stroke-width="0.45" >Detect</text>
<text x="788.5" y="312" font-size="27" fill="#f0f0f0" textLength="94.5" lengthAdjust="spacingAndGlyphs" stroke="#f0f0f0" stroke-width="0.45" >Settings</text>
<g fill="none" stroke="#f0f0f0" stroke-width="2.6"><path d="M242 333 L248 339 L254 333"/><path d="M357 333 L363 339 L369 333"/><path d="M2809 403 L2817 411 L2825 403" stroke-width="3.2"/></g>
<text x="41" y="425" font-size="25" fill="#e8e8e8" textLength="118" lengthAdjust="spacingAndGlyphs" stroke="#e8e8e8" stroke-width="0.45" >Data Model</text>
<text x="242" y="425" font-size="25" fill="#e8e8e8" textLength="124" lengthAdjust="spacingAndGlyphs" stroke="#e8e8e8" stroke-width="0.45" >Calculations</text>
<text x="492" y="425" font-size="25" fill="#e8e8e8" textLength="61" lengthAdjust="spacingAndGlyphs" stroke="#e8e8e8" stroke-width="0.45" >Tables</text>
<text x="618" y="425" font-size="25" fill="#e8e8e8" textLength="138" lengthAdjust="spacingAndGlyphs" stroke="#e8e8e8" stroke-width="0.45" >Relationships</text>
<g>
<path d="M68 207 Q68 200 76 198 L97 199 Q120 198 126 205 L128 220 L106 209 L78 221 V258 L68 253 Z" fill="#86bd4c" stroke="#2c5a0c" stroke-width="1.5"/>
<path d="M78 221 L106.7 208.6 L131.5 221 V256.7 L106.7 266.3 L78 258 Z" fill="#86bd4c" stroke="#2c5a0c" stroke-width="2.8" stroke-linejoin="round"/>
<path d="M107 211 L130 222 V255.5 L107 264.5 Z" fill="#e2f7cc"/>
<path d="M107 229 L130 232 M107 240 L130 242 M107 250.5 L130 251.5" stroke="#7fb04e" stroke-width="1.6"/>
<path d="M120 216 V260" stroke="#9cc476" stroke-width="1.6"/>
<path d="M85 226 V229 M85 234 V254" stroke="#d6f2b4" stroke-width="2.6"/>
<path d="M89 224 L101 222" stroke="#d6f2b4" stroke-width="3.2"/>
<path d="M98 236 V249 Q98 254 92 254" stroke="#d6f2b4" stroke-width="2.4" fill="none"/>
<path d="M94 239 L98 233 L102 239" stroke="#d6f2b4" stroke-width="2" fill="none"/>
</g>
<g>
<rect x="219" y="210" width="61" height="40.5" fill="#f0f0f0" stroke="#b8b8b8" stroke-width="1"/>
<path d="M244 198 L226 257" stroke="#5a5a5a" stroke-width="2.2" fill="none"/>
<path d="M244 198 Q248 195 252 197 Q254 200 251 202" stroke="#e8e8e8" stroke-width="2" fill="none"/>
<path d="M226 257 Q222 260 219 257 Q218 254 221 253" stroke="#e8e8e8" stroke-width="2" fill="none"/>
<path d="M232 219 H246" stroke="#5a5a5a" stroke-width="2" fill="none"/>
<text x="243" y="243" style="font-family:&quot;Liberation Serif&quot;;font-style:italic" font-size="32" fill="#555" textLength="27" lengthAdjust="spacingAndGlyphs">x</text>
</g>
<g>
<rect x="344" y="206" width="40" height="62" fill="#f3ede6"/>
<rect x="349" y="213" width="30" height="12" fill="#c9603a"/>
<rect x="349" y="231" width="30" height="12" fill="#d8c182"/>
<rect x="349" y="249" width="30" height="12" fill="#6ea596"/>
</g>
<g>
<rect x="493" y="200" width="63" height="64" fill="#f0f0f0" stroke="#c8c8c8" stroke-width="1"/>
<rect x="493" y="200" width="63" height="10" fill="#4f81bd"/>
<path d="M496 203 L500 207 L504 203 Z M516 203 L520 207 L524 203 Z M537 203 L541 207 L545 203 Z" fill="#e8f0fa"/>
<path d="M513 210 V264 M534 210 V264 M493 219 H556 M493 228 H556 M493 237 H556 M493 246 H556 M493 255 H556" stroke="#c0c0c0" stroke-width="1.5"/>
</g>
<g>
<rect x="653" y="218" width="28" height="28" fill="#ececec"/>
<rect x="653" y="218" width="28" height="6" fill="#5a86bd"/>
<path d="M659 232 H675 M659 239 H675" stroke="#a0a0a0" stroke-width="1.5"/>
<rect x="693" y="199" width="27" height="27" fill="#ececec"/>
<rect x="693" y="199" width="27" height="6" fill="#5a86bd"/>
<path d="M698 211 H715 M698 218 H715" stroke="#a0a0a0" stroke-width="1.5"/>
<path d="M681 226 L693 214" stroke="#777" stroke-width="1.2"/>
<rect x="688" y="258" width="23" height="7" fill="#d8d8d8"/>
<path d="M706 250 L722 265" stroke="#aaa" stroke-width="4"/>
<circle cx="698" cy="241" r="13" fill="#f4f4f4" stroke="#9a9a9a" stroke-width="3"/>
</g>
<polygon points="849.0,244.5 848.6,248.6 841.9,250.2 840.5,252.8 842.8,259.3 839.7,262.0 833.7,258.4 830.9,259.2 828.0,265.5 823.9,265.1 822.3,258.4 819.7,257.0 813.2,259.3 810.5,256.2 814.1,250.2 813.3,247.4 807.0,244.5 807.4,240.4 814.1,238.8 815.5,236.2 813.2,229.7 816.3,227.0 822.3,230.6 825.1,229.8 828.0,223.5 832.1,223.9 833.7,230.6 836.3,232.0 842.8,229.7 845.5,232.8 841.9,238.8 842.7,241.6" fill="#c9c9c9" stroke="#c9c9c9" stroke-width="3" stroke-linejoin="round"/><circle cx="828" cy="244.5" r="6.5" fill="#2f2f2f"/>
<polygon points="864.5,214.0 864.2,216.8 859.7,218.0 858.7,219.8 860.3,224.3 858.1,226.1 854.0,223.7 852.0,224.3 850.0,228.5 847.2,228.2 846.0,223.7 844.2,222.7 839.7,224.3 837.9,222.1 840.3,218.0 839.7,216.0 835.5,214.0 835.8,211.2 840.3,210.0 841.3,208.2 839.7,203.7 841.9,201.9 846.0,204.3 848.0,203.7 850.0,199.5 852.8,199.8 854.0,204.3 855.8,205.3 860.3,203.7 862.1,205.9 859.7,210.0 860.3,212.0" fill="#c9c9c9" stroke="#c9c9c9" stroke-width="3" stroke-linejoin="round"/><circle cx="850" cy="214" r="4.5" fill="#2f2f2f"/>
<text x="32.5" y="493.5" font-size="31" fill="#f4f4f4" textLength="36" lengthAdjust="spacingAndGlyphs" stroke="#f4f4f4" stroke-width="0.45" >D3</text>
<path d="M225 481 L234 490 L243 481" fill="none" stroke="#f4f4f4" stroke-width="3"/>
<g fill="none" stroke="#8a8a8a" stroke-width="2.2"><path d="M311 470 L336 495 M336 470 L311 495"/><path d="M360 481 L372 494 L396 469"/></g>
<text x="412" y="494" font-size="38" fill="#d4d4d4" style="font-family:&quot;Liberation Serif&quot;;font-style:italic;" textLength="36" lengthAdjust="spacingAndGlyphs" stroke="#d4d4d4" stroke-width="0.45" >fx</text>
<text x="496" y="493.5" font-size="30" fill="#f4f4f4" textLength="157" lengthAdjust="spacingAndGlyphs" stroke="#f4f4f4" stroke-width="0.45" >11/11/2016</text>
<path d="M2833 476 L2842 485 L2851 476" fill="none" stroke="#f4f4f4" stroke-width="3"/>
<text x="136.25" y="558" font-size="29" fill="#e6e6e6" text-anchor="middle" >A</text>
<text x="329.35" y="558" font-size="29" fill="#e6e6e6" text-anchor="middle" >B</text>
<text x="551.25" y="558" font-size="29" fill="#e6e6e6" text-anchor="middle" >C</text>
<text x="746.9" y="558" font-size="29" fill="#f0f0f0" text-anchor="middle" >D</text>
<text x="948.15" y="558" font-size="29" fill="#e6e6e6" text-anchor="middle" >E</text>
<text x="1168.4" y="558" font-size="29" fill="#e6e6e6" text-anchor="middle" >F</text>
<text x="1459.4" y="558" font-size="29" fill="#b8ead0" text-anchor="middle" >G</text>
<text x="1734.6" y="558" font-size="29" fill="#e6e6e6" text-anchor="middle" >H</text>
<text x="1931.7" y="558" font-size="29" fill="#e6e6e6" text-anchor="middle" >I</text>
<text x="2176.5" y="558" font-size="29" fill="#e6e6e6" text-anchor="middle" >J</text>
<text x="2467.7" y="558" font-size="29" fill="#e6e6e6" text-anchor="middle" >K</text>
<text x="2724.7" y="558" font-size="29" fill="#e6e6e6" text-anchor="middle" >L</text>
<path d="M57 530 V561 H26 Z" fill="#6b6b6b"/>
<text x="32.5" y="599.5" font-size="29.5" fill="#e8e8e8" text-anchor="middle" >1</text>
<text x="32.5" y="644.5" font-size="29.5" fill="#e8e8e8" text-anchor="middle" >2</text>
<text x="32.5" y="689.5" font-size="29.5" fill="#e8e8e8" text-anchor="middle" >3</text>
<text x="32.5" y="734.5" font-size="29.5" fill="#e8e8e8" text-anchor="middle" >4</text>
<text x="32.5" y="779.5" font-size="29.5" fill="#e8e8e8" text-anchor="middle" >5</text>
<text x="32.5" y="824.5" font-size="29.5" fill="#e8e8e8" text-anchor="middle" >6</text>
<text x="32.5" y="869.5" font-size="29.5" fill="#e8e8e8" text-anchor="middle" >7</text>
<text x="32.5" y="914.5" font-size="29.5" fill="#e8e8e8" text-anchor="middle" >8</text>
<text x="32.5" y="959.5" font-size="29.5" fill="#e8e8e8" text-anchor="middle" >9</text>
<text x="32.5" y="1004.5" font-size="29.5" fill="#e8e8e8" text-anchor="middle" >10</text>
<text x="32.5" y="1049.5" font-size="29.5" fill="#e8e8e8" text-anchor="middle" >11</text>
<text x="32.5" y="1094.5" font-size="29.5" fill="#e8e8e8" text-anchor="middle" >12</text>
<text x="32.5" y="1139.5" font-size="29.5" fill="#e8e8e8" text-anchor="middle" >13</text>
<text x="32.5" y="1184.5" font-size="29.5" fill="#e8e8e8" text-anchor="middle" >14</text>
<text x="32.5" y="1229.5" font-size="29.5" fill="#e8e8e8" text-anchor="middle" >15</text>
<text x="32.5" y="1274.5" font-size="29.5" fill="#e8e8e8" text-anchor="middle" >16</text>
<text x="32.5" y="1319.5" font-size="29.5" fill="#e8e8e8" text-anchor="middle" >17</text>
<text x="32.5" y="1364.5" font-size="29.5" fill="#e8e8e8" text-anchor="middle" >18</text>
<text x="67.7" y="600.0" font-size="27.5" fill="#f0f8e4" font-weight="bold" textLength="97.1" lengthAdjust="spacingAndGlyphs" >Row ID</text>
<path d="M184.5 586 H197.5 L191.0 593.5 Z" fill="#6a6a6a"/>
<text x="215.2" y="600.0" font-size="27.5" fill="#f0f8e4" font-weight="bold" textLength="119.0" lengthAdjust="spacingAndGlyphs" >Order ID</text>
<path d="M422.2 586 H435.2 L428.7 593.5 Z" fill="#6a6a6a"/>
<text x="454" y="600.0" font-size="27.5" fill="#f0f8e4" font-weight="bold" textLength="154.8" lengthAdjust="spacingAndGlyphs" >Order Date</text>
<path d="M628.3 586 H641.3 L634.8 593.5 Z" fill="#6a6a6a"/>
<text x="658" y="600.0" font-size="27.5" fill="#f0f8e4" font-weight="bold" textLength="133.5" lengthAdjust="spacingAndGlyphs" >Ship Date</text>
<path d="M813.5 586 H826.5 L820.0 593.5 Z" fill="#6a6a6a"/>
<text x="842.5" y="600.0" font-size="27.5" fill="#f0f8e4" font-weight="bold" textLength="148.5" lengthAdjust="spacingAndGlyphs" >Ship Mode</text>
<path d="M1030.8 586 H1043.8 L1037.3 593.5 Z" fill="#6a6a6a"/>
<text x="1061.5" y="600.0" font-size="27.5" fill="#f0f8e4" font-weight="bold" textLength="172.8" lengthAdjust="spacingAndGlyphs" >Customer ID</text>
<path d="M1254 586 H1267 L1260.5 593.5 Z" fill="#6a6a6a"/>
<text x="1285.4" y="600.0" font-size="27.5" fill="#f0f8e4" font-weight="bold" textLength="224.0" lengthAdjust="spacingAndGlyphs" >Customer Name</text>
<path d="M1612.8 586 H1625.8 L1619.3 593.5 Z" fill="#6a6a6a"/>
<text x="1642.8" y="600.0" font-size="27.5" fill="#f0f8e4" font-weight="bold" textLength="120.7" lengthAdjust="spacingAndGlyphs" >Segment</text>
<path d="M1804.4 586 H1817.4 L1810.9 593.5 Z" fill="#6a6a6a"/>
<text x="1835.4" y="600.0" font-size="27.5" fill="#f0f8e4" font-weight="bold" textLength="111.6" lengthAdjust="spacingAndGlyphs" >Country</text>
<path d="M2007 586 H2020 L2013.5 593.5 Z" fill="#6a6a6a"/>
<text x="2038" y="600.0" font-size="27.5" fill="#f0f8e4" font-weight="bold" textLength="52" lengthAdjust="spacingAndGlyphs" >City</text>
<path d="M2294 586 H2307 L2300.5 593.5 Z" fill="#6a6a6a"/>
<text x="2325.5" y="600.0" font-size="27.5" fill="#f0f8e4" font-weight="bold" textLength="72.5" lengthAdjust="spacingAndGlyphs" >State</text>
<path d="M2589.4 586 H2602.4 L2595.9 593.5 Z" fill="#6a6a6a"/>
<text x="2621" y="600.0" font-size="27.5" fill="#f0f8e4" font-weight="bold" textLength="162.4" lengthAdjust="spacingAndGlyphs" >Postal Code</text>
<path d="M2808 586 H2821 L2814.5 593.5 Z" fill="#6a6a6a"/>
<text x="203.5" y="644.4" font-size="29.8" fill="#161616" text-anchor="end" textLength="14.4" lengthAdjust="spacingAndGlyphs" >1</text>
<text x="215.7" y="644.4" font-size="29.8" fill="#161616" textLength="223.7" lengthAdjust="spacingAndGlyphs" >CA-2016-152156</text>
<text x="647.3" y="644.4" font-size="29.8" fill="#161616" text-anchor="end" textLength="141.4" lengthAdjust="spacingAndGlyphs" >11/8/2016</text>
<text x="832.5" y="644.4" font-size="29.8" fill="#161616" text-anchor="end" textLength="158.3" lengthAdjust="spacingAndGlyphs" >11/11/2016</text>
<text x="844.7" y="644.4" font-size="29.8" fill="#161616" textLength="176.0" lengthAdjust="spacingAndGlyphs" >Second Class</text>
<text x="1062.0" y="644.4" font-size="29.8" fill="#161616" textLength="133.2" lengthAdjust="spacingAndGlyphs" >CG-12520</text>
<text x="1285.2" y="644.4" font-size="29.8" fill="#161616" textLength="151.7" lengthAdjust="spacingAndGlyphs" >Claire Gute</text>
<text x="1644.0" y="644.4" font-size="29.8" fill="#161616" textLength="141.3" lengthAdjust="spacingAndGlyphs" >Consumer</text>
<text x="1835.6000000000001" y="644.4" font-size="29.8" fill="#161616" textLength="180.7" lengthAdjust="spacingAndGlyphs" >United States</text>
<text x="2038.2" y="644.4" font-size="29.8" fill="#161616" textLength="150.3" lengthAdjust="spacingAndGlyphs" >Henderson</text>
<text x="2325.2" y="644.4" font-size="29.8" fill="#161616" textLength="124.4" lengthAdjust="spacingAndGlyphs" >Kentucky</text>
<text x="2827" y="644.4" font-size="29.8" fill="#161616" text-anchor="end" textLength="81.9" lengthAdjust="spacingAndGlyphs" >42420</text>
<text x="203.5" y="689.4" font-size="29.8" fill="#161616" text-anchor="end" textLength="14.4" lengthAdjust="spacingAndGlyphs" >2</text>
<text x="215.7" y="689.4" font-size="29.8" fill="#161616" textLength="223.7" lengthAdjust="spacingAndGlyphs" >CA-2016-152156</text>
<text x="647.3" y="689.4" font-size="29.8" fill="#161616" text-anchor="end" textLength="141.4" lengthAdjust="spacingAndGlyphs" >11/8/2016</text>
<text x="832.5" y="689.4" font-size="29.8" fill="#161616" text-anchor="end" textLength="158.3" lengthAdjust="spacingAndGlyphs" >11/11/2016</text>
<text x="844.7" y="689.4" font-size="29.8" fill="#161616" textLength="176.0" lengthAdjust="spacingAndGlyphs" >Second Class</text>
<text x="1062.0" y="689.4" font-size="29.8" fill="#161616" textLength="133.2" lengthAdjust="spacingAndGlyphs" >CG-12520</text>
<text x="1285.2" y="689.4" font-size="29.8" fill="#161616" textLength="151.7" lengthAdjust="spacingAndGlyphs" >Claire Gute</text>
<text x="1644.0" y="689.4" font-size="29.8" fill="#161616" textLength="141.3" lengthAdjust="spacingAndGlyphs" >Consumer</text>
<text x="1835.6000000000001" y="689.4" font-size="29.8" fill="#161616" textLength="180.7" lengthAdjust="spacingAndGlyphs" >United States</text>
<text x="2038.2" y="689.4" font-size="29.8" fill="#161616" textLength="150.3" lengthAdjust="spacingAndGlyphs" >Henderson</text>
<text x="2325.2" y="689.4" font-size="29.8" fill="#161616" textLength="124.4" lengthAdjust="spacingAndGlyphs" >Kentucky</text>
<text x="2827" y="689.4" font-size="29.8" fill="#161616" text-anchor="end" textLength="81.9" lengthAdjust="spacingAndGlyphs" >42420</text>
<text x="203.5" y="734.4" font-size="29.8" fill="#161616" text-anchor="end" textLength="14.4" lengthAdjust="spacingAndGlyphs" >3</text>
<text x="215.7" y="734.4" font-size="29.8" fill="#161616" textLength="223.7" lengthAdjust="spacingAndGlyphs" >CA-2016-138688</text>
<text x="647.3" y="734.4" font-size="29.8" fill="#161616" text-anchor="end" textLength="141.4" lengthAdjust="spacingAndGlyphs" >6/12/2016</text>
<text x="832.5" y="734.4" font-size="29.8" fill="#161616" text-anchor="end" textLength="141.4" lengthAdjust="spacingAndGlyphs" >6/16/2016</text>
<text x="844.7" y="734.4" font-size="29.8" fill="#161616" textLength="176.0" lengthAdjust="spacingAndGlyphs" >Second Class</text>
<text x="1062.0" y="734.4" font-size="29.8" fill="#161616" textLength="130.9" lengthAdjust="spacingAndGlyphs" >DV-13045</text>
<text x="1285.2" y="734.4" font-size="29.8" fill="#161616" textLength="214.2" lengthAdjust="spacingAndGlyphs" >Darrin Van Huff</text>
<text x="1644.0" y="734.4" font-size="29.8" fill="#161616" textLength="140.2" lengthAdjust="spacingAndGlyphs" >Corporate</text>
<text x="1835.6000000000001" y="734.4" font-size="29.8" fill="#161616" textLength="180.7" lengthAdjust="spacingAndGlyphs" >United States</text>
<text x="2038.2" y="734.4" font-size="29.8" fill="#161616" textLength="158.7" lengthAdjust="spacingAndGlyphs" >Los Angeles</text>
<text x="2325.2" y="734.4" font-size="29.8" fill="#161616" textLength="131.6" lengthAdjust="spacingAndGlyphs" >California</text>
<text x="2827" y="734.4" font-size="29.8" fill="#161616" text-anchor="end" textLength="81.9" lengthAdjust="spacingAndGlyphs" >90036</text>
<text x="203.5" y="779.4" font-size="29.8" fill="#161616" text-anchor="end" textLength="14.4" lengthAdjust="spacingAndGlyphs" >4</text>
<text x="215.7" y="779.4" font-size="29.8" fill="#161616" textLength="223.3" lengthAdjust="spacingAndGlyphs" >US-2015-108966</text>
<text x="647.3" y="779.4" font-size="29.8" fill="#161616" text-anchor="end" textLength="158.3" lengthAdjust="spacingAndGlyphs" >10/11/2015</text>
<text x="832.5" y="779.4" font-size="29.8" fill="#161616" text-anchor="end" textLength="158.3" lengthAdjust="spacingAndGlyphs" >10/18/2015</text>
<text x="844.7" y="779.4" font-size="29.8" fill="#161616" textLength="201.2" lengthAdjust="spacingAndGlyphs" >Standard Class</text>
<text x="1062.0" y="779.4" font-size="29.8" fill="#161616" textLength="130.3" lengthAdjust="spacingAndGlyphs" >SO-20335</text>
<text x="1285.2" y="779.4" font-size="29.8" fill="#161616" textLength="210.2" lengthAdjust="spacingAndGlyphs" >Sean O&#x27;Donnell</text>
<text x="1644.0" y="779.4" font-size="29.8" fill="#161616" textLength="141.3" lengthAdjust="spacingAndGlyphs" >Consumer</text>
<text x="1835.6000000000001" y="779.4" font-size="29.8" fill="#161616" textLength="180.7" lengthAdjust="spacingAndGlyphs" >United States</text>
<text x="2038.2" y="779.4" font-size="29.8" fill="#161616" textLength="214.9" lengthAdjust="spacingAndGlyphs" >Fort Lauderdale</text>
<text x="2325.2" y="779.4" font-size="29.8" fill="#161616" textLength="93.7" lengthAdjust="spacingAndGlyphs" >Florida</text>
<text x="2827" y="779.4" font-size="29.8" fill="#161616" text-anchor="end" textLength="81.9" lengthAdjust="spacingAndGlyphs" >33311</text>
<text x="203.5" y="824.4" font-size="29.8" fill="#161616" text-anchor="end" textLength="14.4" lengthAdjust="spacingAndGlyphs" >5</text>
<text x="215.7" y="824.4" font-size="29.8" fill="#161616" textLength="223.3" lengthAdjust="spacingAndGlyphs" >US-2015-108966</text>
<text x="647.3" y="824.4" font-size="29.8" fill="#161616" text-anchor="end" textLength="158.3" lengthAdjust="spacingAndGlyphs" >10/11/2015</text>
<text x="832.5" y="824.4" font-size="29.8" fill="#161616" text-anchor="end" textLength="158.3" lengthAdjust="spacingAndGlyphs" >10/18/2015</text>
<text x="844.7" y="824.4" font-size="29.8" fill="#161616" textLength="201.2" lengthAdjust="spacingAndGlyphs" >Standard Class</text>
<text x="1062.0" y="824.4" font-size="29.8" fill="#161616" textLength="130.3" lengthAdjust="spacingAndGlyphs" >SO-20335</text>
<text x="1285.2" y="824.4" font-size="29.8" fill="#161616" textLength="210.2" lengthAdjust="spacingAndGlyphs" >Sean O&#x27;Donnell</text>
<text x="1644.0" y="824.4" font-size="29.8" fill="#161616" textLength="141.3" lengthAdjust="spacingAndGlyphs" >Consumer</text>
<text x="1835.6000000000001" y="824.4" font-size="29.8" fill="#161616" textLength="180.7" lengthAdjust="spacingAndGlyphs" >United States</text>
<text x="2038.2" y="824.4" font-size="29.8" fill="#161616" textLength="214.9" lengthAdjust="spacingAndGlyphs" >Fort Lauderdale</text>
<text x="2325.2" y="824.4" font-size="29.8" fill="#161616" textLength="93.7" lengthAdjust="spacingAndGlyphs" >Florida</text>
<text x="2827" y="824.4" font-size="29.8" fill="#161616" text-anchor="end" textLength="81.9" lengthAdjust="spacingAndGlyphs" >33311</text>
<text x="203.5" y="869.4" font-size="29.8" fill="#161616" text-anchor="end" textLength="14.4" lengthAdjust="spacingAndGlyphs" >6</text>
<text x="215.7" y="869.4" font-size="29.8" fill="#161616" textLength="223.7" lengthAdjust="spacingAndGlyphs" >CA-2014-115812</text>
<text x="647.3" y="869.4" font-size="29.8" fill="#161616" text-anchor="end" textLength="124.5" lengthAdjust="spacingAndGlyphs" >6/9/2014</text>
<text x="832.5" y="869.4" font-size="29.8" fill="#161616" text-anchor="end" textLength="141.4" lengthAdjust="spacingAndGlyphs" >6/14/2014</text>
<text x="844.7" y="869.4" font-size="29.8" fill="#161616" textLength="201.2" lengthAdjust="spacingAndGlyphs" >Standard Class</text>
<text x="1062.0" y="869.4" font-size="29.8" fill="#161616" textLength="131.5" lengthAdjust="spacingAndGlyphs" >BH-11710</text>
<text x="1285.2" y="869.4" font-size="29.8" fill="#161616" textLength="231.7" lengthAdjust="spacingAndGlyphs" >Brosina Hoffman</text>
<text x="1644.0" y="869.4" font-size="29.8" fill="#161616" textLength="141.3" lengthAdjust="spacingAndGlyphs" >Consumer</text>
<text x="1835.6000000000001" y="869.4" font-size="29.8" fill="#161616" textLength="180.7" lengthAdjust="spacingAndGlyphs" >United States</text>
<text x="2038.2" y="869.4" font-size="29.8" fill="#161616" textLength="158.7" lengthAdjust="spacingAndGlyphs" >Los Angeles</text>
<text x="2325.2" y="869.4" font-size="29.8" fill="#161616" textLength="131.6" lengthAdjust="spacingAndGlyphs" >California</text>
<text x="2827" y="869.4" font-size="29.8" fill="#161616" text-anchor="end" textLength="81.9" lengthAdjust="spacingAndGlyphs" >90032</text>
<text x="203.5" y="914.4" font-size="29.8" fill="#161616" text-anchor="end" textLength="14.4" lengthAdjust="spacingAndGlyphs" >7</text>
<text x="215.7" y="914.4" font-size="29.8" fill="#161616" textLength="223.7" lengthAdjust="spacingAndGlyphs" >CA-2014-115812</text>
<text x="647.3" y="914.4" font-size="29.8" fill="#161616" text-anchor="end" textLength="124.5" lengthAdjust="spacingAndGlyphs" >6/9/2014</text>
<text x="832.5" y="914.4" font-size="29.8" fill="#161616" text-anchor="end" textLength="141.4" lengthAdjust="spacingAndGlyphs" >6/14/2014</text>
<text x="844.7" y="914.4" font-size="29.8" fill="#161616" textLength="201.2" lengthAdjust="spacingAndGlyphs" >Standard Class</text>
<text x="1062.0" y="914.4" font-size="29.8" fill="#161616" textLength="131.5" lengthAdjust="spacingAndGlyphs" >BH-11710</text>
<text x="1285.2" y="914.4" font-size="29.8" fill="#161616" textLength="231.7" lengthAdjust="spacingAndGlyphs" >Brosina Hoffman</text>
<text x="1644.0" y="914.4" font-size="29.8" fill="#161616" textLength="141.3" lengthAdjust="spacingAndGlyphs" >Consumer</text>
<text x="1835.6000000000001" y="914.4" font-size="29.8" fill="#161616" textLength="180.7" lengthAdjust="spacingAndGlyphs" >United States</text>
<text x="2038.2" y="914.4" font-size="29.8" fill="#161616" textLength="158.7" lengthAdjust="spacingAndGlyphs" >Los Angeles</text>
<text x="2325.2" y="914.4" font-size="29.8" fill="#161616" textLength="131.6" lengthAdjust="spacingAndGlyphs" >California</text>
<text x="2827" y="914.4" font-size="29.8" fill="#161616" text-anchor="end" textLength="81.9" lengthAdjust="spacingAndGlyphs" >90032</text>
<text x="203.5" y="959.4" font-size="29.8" fill="#161616" text-anchor="end" textLength="14.4" lengthAdjust="spacingAndGlyphs" >8</text>
<text x="215.7" y="959.4" font-size="29.8" fill="#161616" textLength="223.7" lengthAdjust="spacingAndGlyphs" >CA-2014-115812</text>
<text x="647.3" y="959.4" font-size="29.8" fill="#161616" text-anchor="end" textLength="124.5" lengthAdjust="spacingAndGlyphs" >6/9/2014</text>
<text x="832.5" y="959.4" font-size="29.8" fill="#161616" text-anchor="end" textLength="141.4" lengthAdjust="spacingAndGlyphs" >6/14/2014</text>
<text x="844.7" y="959.4" font-size="29.8" fill="#161616" textLength="201.2" lengthAdjust="spacingAndGlyphs" >Standard Class</text>
<text x="1062.0" y="959.4" font-size="29.8" fill="#161616" textLength="131.5" lengthAdjust="spacingAndGlyphs" >BH-11710</text>
<text x="1285.2" y="959.4" font-size="29.8" fill="#161616" textLength="231.7" lengthAdjust="spacingAndGlyphs" >Brosina Hoffman</text>
<text x="1644.0" y="959.4" font-size="29.8" fill="#161616" textLength="141.3" lengthAdjust="spacingAndGlyphs" >Consumer</text>
<text x="1835.6000000000001" y="959.4" font-size="29.8" fill="#161616" textLength="180.7" lengthAdjust="spacingAndGlyphs" >United States</text>
<text x="2038.2" y="959.4" font-size="29.8" fill="#161616" textLength="158.7" lengthAdjust="spacingAndGlyphs" >Los Angeles</text>
<text x="2325.2" y="959.4" font-size="29.8" fill="#161616" textLength="131.6" lengthAdjust="spacingAndGlyphs" >California</text>
<text x="2827" y="959.4" font-size="29.8" fill="#161616" text-anchor="end" textLength="81.9" lengthAdjust="spacingAndGlyphs" >90032</text>
<text x="203.5" y="1004.4" font-size="29.8" fill="#161616" text-anchor="end" textLength="14.4" lengthAdjust="spacingAndGlyphs" >9</text>
<text x="215.7" y="1004.4" font-size="29.8" fill="#161616" textLength="223.7" lengthAdjust="spacingAndGlyphs" >CA-2014-115812</text>
<text x="647.3" y="1004.4" font-size="29.8" fill="#161616" text-anchor="end" textLength="124.5" lengthAdjust="spacingAndGlyphs" >6/9/2014</text>
<text x="832.5" y="1004.4" font-size="29.8" fill="#161616" text-anchor="end" textLength="141.4" lengthAdjust="spacingAndGlyphs" >6/14/2014</text>
<text x="844.7" y="1004.4" font-size="29.8" fill="#161616" textLength="201.2" lengthAdjust="spacingAndGlyphs" >Standard Class</text>
<text x="1062.0" y="1004.4" font-size="29.8" fill="#161616" textLength="131.5" lengthAdjust="spacingAndGlyphs" >BH-11710</text>
<text x="1285.2" y="1004.4" font-size="29.8" fill="#161616" textLength="231.7" lengthAdjust="spacingAndGlyphs" >Brosina Hoffman</text>
<text x="1644.0" y="1004.4" font-size="29.8" fill="#161616" textLength="141.3" lengthAdjust="spacingAndGlyphs" >Consumer</text>
<text x="1835.6000000000001" y="1004.4" font-size="29.8" fill="#161616" textLength="180.7" lengthAdjust="spacingAndGlyphs" >United States</text>
<text x="2038.2" y="1004.4" font-size="29.8" fill="#161616" textLength="158.7" lengthAdjust="spacingAndGlyphs" >Los Angeles</text>
<text x="2325.2" y="1004.4" font-size="29.8" fill="#161616" textLength="131.6" lengthAdjust="spacingAndGlyphs" >California</text>
<text x="2827" y="1004.4" font-size="29.8" fill="#161616" text-anchor="end" textLength="81.9" lengthAdjust="spacingAndGlyphs" >90032</text>
<text x="203.5" y="1049.4" font-size="29.8" fill="#161616" text-anchor="end" textLength="31.3" lengthAdjust="spacingAndGlyphs" >10</text>
<text x="215.7" y="1049.4" font-size="29.8" fill="#161616" textLength="223.7" lengthAdjust="spacingAndGlyphs" >CA-2014-115812</text>
<text x="647.3" y="1049.4" font-size="29.8" fill="#161616" text-anchor="end" textLength="124.5" lengthAdjust="spacingAndGlyphs" >6/9/2014</text>
<text x="832.5" y="1049.4" font-size="29.8" fill="#161616" text-anchor="end" textLength="141.4" lengthAdjust="spacingAndGlyphs" >6/14/2014</text>
<text x="844.7" y="1049.4" font-size="29.8" fill="#161616" textLength="201.2" lengthAdjust="spacingAndGlyphs" >Standard Class</text>
<text x="1062.0" y="1049.4" font-size="29.8" fill="#161616" textLength="131.5" lengthAdjust="spacingAndGlyphs" >BH-11710</text>
<text x="1285.2" y="1049.4" font-size="29.8" fill="#161616" textLength="231.7" lengthAdjust="spacingAndGlyphs" >Brosina Hoffman</text>
<text x="1644.0" y="1049.4" font-size="29.8" fill="#161616" textLength="141.3" lengthAdjust="spacingAndGlyphs" >Consumer</text>
<text x="1835.6000000000001" y="1049.4" font-size="29.8" fill="#161616" textLength="180.7" lengthAdjust="spacingAndGlyphs" >United States</text>
<text x="2038.2" y="1049.4" font-size="29.8" fill="#161616" textLength="158.7" lengthAdjust="spacingAndGlyphs" >Los Angeles</text>
<text x="2325.2" y="1049.4" font-size="29.8" fill="#161616" textLength="131.6" lengthAdjust="spacingAndGlyphs" >California</text>
<text x="2827" y="1049.4" font-size="29.8" fill="#161616" text-anchor="end" textLength="81.9" lengthAdjust="spacingAndGlyphs" >90032</text>
<text x="203.5" y="1094.4" font-size="29.8" fill="#161616" text-anchor="end" textLength="31.3" lengthAdjust="spacingAndGlyphs" >11</text>
<text x="215.7" y="1094.4" font-size="29.8" fill="#161616" textLength="223.7" lengthAdjust="spacingAndGlyphs" >CA-2014-115812</text>
<text x="647.3" y="1094.4" font-size="29.8" fill="#161616" text-anchor="end" textLength="124.5" lengthAdjust="spacingAndGlyphs" >6/9/2014</text>
<text x="832.5" y="1094.4" font-size="29.8" fill="#161616" text-anchor="end" textLength="141.4" lengthAdjust="spacingAndGlyphs" >6/14/2014</text>
<text x="844.7" y="1094.4" font-size="29.8" fill="#161616" textLength="201.2" lengthAdjust="spacingAndGlyphs" >Standard Class</text>
<text x="1062.0" y="1094.4" font-size="29.8" fill="#161616" textLength="131.5" lengthAdjust="spacingAndGlyphs" >BH-11710</text>
<text x="1285.2" y="1094.4" font-size="29.8" fill="#161616" textLength="231.7" lengthAdjust="spacingAndGlyphs" >Brosina Hoffman</text>
<text x="1644.0" y="1094.4" font-size="29.8" fill="#161616" textLength="141.3" lengthAdjust="spacingAndGlyphs" >Consumer</text>
<text x="1835.6000000000001" y="1094.4" font-size="29.8" fill="#161616" textLength="180.7" lengthAdjust="spacingAndGlyphs" >United States</text>
<text x="2038.2" y="1094.4" font-size="29.8" fill="#161616" textLength="158.7" lengthAdjust="spacingAndGlyphs" >Los Angeles</text>
<text x="2325.2" y="1094.4" font-size="29.8" fill="#161616" textLength="131.6" lengthAdjust="spacingAndGlyphs" >California</text>
<text x="2827" y="1094.4" font-size="29.8" fill="#161616" text-anchor="end" textLength="81.9" lengthAdjust="spacingAndGlyphs" >90032</text>
<text x="203.5" y="1139.4" font-size="29.8" fill="#161616" text-anchor="end" textLength="31.3" lengthAdjust="spacingAndGlyphs" >12</text>
<text x="215.7" y="1139.4" font-size="29.8" fill="#161616" textLength="223.7" lengthAdjust="spacingAndGlyphs" >CA-2014-115812</text>
<text x="647.3" y="1139.4" font-size="29.8" fill="#161616" text-anchor="end" textLength="124.5" lengthAdjust="spacingAndGlyphs" >6/9/2014</text>
<text x="832.5" y="1139.4" font-size="29.8" fill="#161616" text-anchor="end" textLength="141.4" lengthAdjust="spacingAndGlyphs" >6/14/2014</text>
<text x="844.7" y="1139.4" font-size="29.8" fill="#161616" textLength="201.2" lengthAdjust="spacingAndGlyphs" >Standard Class</text>
<text x="1062.0" y="1139.4" font-size="29.8" fill="#161616" textLength="131.5" lengthAdjust="spacingAndGlyphs" >BH-11710</text>
<text x="1285.2" y="1139.4" font-size="29.8" fill="#161616" textLength="231.7" lengthAdjust="spacingAndGlyphs" >Brosina Hoffman</text>
<text x="1644.0" y="1139.4" font-size="29.8" fill="#161616" textLength="141.3" lengthAdjust="spacingAndGlyphs" >Consumer</text>
<text x="1835.6000000000001" y="1139.4" font-size="29.8" fill="#161616" textLength="180.7" lengthAdjust="spacingAndGlyphs" >United States</text>
<text x="2038.2" y="1139.4" font-size="29.8" fill="#161616" textLength="158.7" lengthAdjust="spacingAndGlyphs" >Los Angeles</text>
<text x="2325.2" y="1139.4" font-size="29.8" fill="#161616" textLength="131.6" lengthAdjust="spacingAndGlyphs" >California</text>
<text x="2827" y="1139.4" font-size="29.8" fill="#161616" text-anchor="end" textLength="81.9" lengthAdjust="spacingAndGlyphs" >90032</text>
<text x="203.5" y="1184.4" font-size="29.8" fill="#161616" text-anchor="end" textLength="31.3" lengthAdjust="spacingAndGlyphs" >13</text>
<text x="215.7" y="1184.4" font-size="29.8" fill="#161616" textLength="223.7" lengthAdjust="spacingAndGlyphs" >CA-2017-114412</text>
<text x="647.3" y="1184.4" font-size="29.8" fill="#161616" text-anchor="end" textLength="141.4" lengthAdjust="spacingAndGlyphs" >4/15/2017</text>
<text x="832.5" y="1184.4" font-size="29.8" fill="#161616" text-anchor="end" textLength="141.4" lengthAdjust="spacingAndGlyphs" >4/20/2017</text>
<text x="844.7" y="1184.4" font-size="29.8" fill="#161616" textLength="201.2" lengthAdjust="spacingAndGlyphs" >Standard Class</text>
<text x="1062.0" y="1184.4" font-size="29.8" fill="#161616" textLength="133.3" lengthAdjust="spacingAndGlyphs" >AA-10480</text>
<text x="1285.2" y="1184.4" font-size="29.8" fill="#161616" textLength="184.3" lengthAdjust="spacingAndGlyphs" >Andrew Allen</text>
<text x="1644.0" y="1184.4" font-size="29.8" fill="#161616" textLength="141.3" lengthAdjust="spacingAndGlyphs" >Consumer</text>
<text x="1835.6000000000001" y="1184.4" font-size="29.8" fill="#161616" textLength="180.7" lengthAdjust="spacingAndGlyphs" >United States</text>
<text x="2038.2" y="1184.4" font-size="29.8" fill="#161616" textLength="115.6" lengthAdjust="spacingAndGlyphs" >Concord</text>
<text x="2325.2" y="1184.4" font-size="29.8" fill="#161616" textLength="200.2" lengthAdjust="spacingAndGlyphs" >North Carolina</text>
<text x="2827" y="1184.4" font-size="29.8" fill="#161616" text-anchor="end" textLength="81.9" lengthAdjust="spacingAndGlyphs" >28027</text>
<text x="203.5" y="1229.4" font-size="29.8" fill="#161616" text-anchor="end" textLength="31.3" lengthAdjust="spacingAndGlyphs" >14</text>
<text x="215.7" y="1229.4" font-size="29.8" fill="#161616" textLength="223.7" lengthAdjust="spacingAndGlyphs" >CA-2016-161389</text>
<text x="647.3" y="1229.4" font-size="29.8" fill="#161616" text-anchor="end" textLength="141.4" lengthAdjust="spacingAndGlyphs" >12/5/2016</text>
<text x="832.5" y="1229.4" font-size="29.8" fill="#161616" text-anchor="end" textLength="158.3" lengthAdjust="spacingAndGlyphs" >12/10/2016</text>
<text x="844.7" y="1229.4" font-size="29.8" fill="#161616" textLength="201.2" lengthAdjust="spacingAndGlyphs" >Standard Class</text>
<text x="1062.0" y="1229.4" font-size="29.8" fill="#161616" textLength="131.7" lengthAdjust="spacingAndGlyphs" >IM-15070</text>
<text x="1285.2" y="1229.4" font-size="29.8" fill="#161616" textLength="193.0" lengthAdjust="spacingAndGlyphs" >Irene Maddox</text>
<text x="1644.0" y="1229.4" font-size="29.8" fill="#161616" textLength="141.3" lengthAdjust="spacingAndGlyphs" >Consumer</text>
<text x="1835.6000000000001" y="1229.4" font-size="29.8" fill="#161616" textLength="180.7" lengthAdjust="spacingAndGlyphs" >United States</text>
<text x="2038.2" y="1229.4" font-size="29.8" fill="#161616" textLength="93.7" lengthAdjust="spacingAndGlyphs" >Seattle</text>
<text x="2325.2" y="1229.4" font-size="29.8" fill="#161616" textLength="164.3" lengthAdjust="spacingAndGlyphs" >Washington</text>
<text x="2827" y="1229.4" font-size="29.8" fill="#161616" text-anchor="end" textLength="81.9" lengthAdjust="spacingAndGlyphs" >98103</text>
<text x="203.5" y="1274.4" font-size="29.8" fill="#161616" text-anchor="end" textLength="31.3" lengthAdjust="spacingAndGlyphs" >15</text>
<text x="215.7" y="1274.4" font-size="29.8" fill="#161616" textLength="223.3" lengthAdjust="spacingAndGlyphs" >US-2015-118983</text>
<text x="647.3" y="1274.4" font-size="29.8" fill="#161616" text-anchor="end" textLength="158.3" lengthAdjust="spacingAndGlyphs" >11/22/2015</text>
<text x="832.5" y="1274.4" font-size="29.8" fill="#161616" text-anchor="end" textLength="158.3" lengthAdjust="spacingAndGlyphs" >11/26/2015</text>
<text x="844.7" y="1274.4" font-size="29.8" fill="#161616" textLength="201.2" lengthAdjust="spacingAndGlyphs" >Standard Class</text>
<text x="1062.0" y="1274.4" font-size="29.8" fill="#161616" textLength="130.7" lengthAdjust="spacingAndGlyphs" >HP-14815</text>
<text x="1285.2" y="1274.4" font-size="29.8" fill="#161616" textLength="198.4" lengthAdjust="spacingAndGlyphs" >Harold Pawlan</text>
<text x="1644.0" y="1274.4" font-size="29.8" fill="#161616" textLength="170.8" lengthAdjust="spacingAndGlyphs" >Home Office</text>
<text x="1835.6000000000001" y="1274.4" font-size="29.8" fill="#161616" textLength="180.7" lengthAdjust="spacingAndGlyphs" >United States</text>
<text x="2038.2" y="1274.4" font-size="29.8" fill="#161616" textLength="151.5" lengthAdjust="spacingAndGlyphs" >Fort Worth</text>
<text x="2325.2" y="1274.4" font-size="29.8" fill="#161616" textLength="77.7" lengthAdjust="spacingAndGlyphs" >Texas</text>
<text x="2827" y="1274.4" font-size="29.8" fill="#161616" text-anchor="end" textLength="81.9" lengthAdjust="spacingAndGlyphs" >76106</text>
<text x="203.5" y="1319.4" font-size="29.8" fill="#161616" text-anchor="end" textLength="31.3" lengthAdjust="spacingAndGlyphs" >16</text>
<text x="215.7" y="1319.4" font-size="29.8" fill="#161616" textLength="223.3" lengthAdjust="spacingAndGlyphs" >US-2015-118983</text>
<text x="647.3" y="1319.4" font-size="29.8" fill="#161616" text-anchor="end" textLength="158.3" lengthAdjust="spacingAndGlyphs" >11/22/2015</text>
<text x="832.5" y="1319.4" font-size="29.8" fill="#161616" text-anchor="end" textLength="158.3" lengthAdjust="spacingAndGlyphs" >11/26/2015</text>
<text x="844.7" y="1319.4" font-size="29.8" fill="#161616" textLength="201.2" lengthAdjust="spacingAndGlyphs" >Standard Class</text>
<text x="1062.0" y="1319.4" font-size="29.8" fill="#161616" textLength="130.7" lengthAdjust="spacingAndGlyphs" >HP-14815</text>
<text x="1285.2" y="1319.4" font-size="29.8" fill="#161616" textLength="198.4" lengthAdjust="spacingAndGlyphs" >Harold Pawlan</text>
<text x="1644.0" y="1319.4" font-size="29.8" fill="#161616" textLength="170.8" lengthAdjust="spacingAndGlyphs" >Home Office</text>
<text x="1835.6000000000001" y="1319.4" font-size="29.8" fill="#161616" textLength="180.7" lengthAdjust="spacingAndGlyphs" >United States</text>
<text x="2038.2" y="1319.4" font-size="29.8" fill="#161616" textLength="151.5" lengthAdjust="spacingAndGlyphs" >Fort Worth</text>
<text x="2325.2" y="1319.4" font-size="29.8" fill="#161616" textLength="77.7" lengthAdjust="spacingAndGlyphs" >Texas</text>
<text x="2827" y="1319.4" font-size="29.8" fill="#161616" text-anchor="end" textLength="81.9" lengthAdjust="spacingAndGlyphs" >76106</text>
<text x="203.5" y="1364.4" font-size="29.8" fill="#161616" text-anchor="end" textLength="31.3" lengthAdjust="spacingAndGlyphs" >17</text>
<text x="215.7" y="1364.4" font-size="29.8" fill="#161616" textLength="223.7" lengthAdjust="spacingAndGlyphs" >CA-2014-105893</text>
<text x="647.3" y="1364.4" font-size="29.8" fill="#161616" text-anchor="end" textLength="158.3" lengthAdjust="spacingAndGlyphs" >11/11/2014</text>
<text x="832.5" y="1364.4" font-size="29.8" fill="#161616" text-anchor="end" textLength="158.3" lengthAdjust="spacingAndGlyphs" >11/18/2014</text>
<text x="844.7" y="1364.4" font-size="29.8" fill="#161616" textLength="201.2" lengthAdjust="spacingAndGlyphs" >Standard Class</text>
<text x="1062.0" y="1364.4" font-size="29.8" fill="#161616" textLength="125.7" lengthAdjust="spacingAndGlyphs" >PK-19075</text>
<text x="1285.2" y="1364.4" font-size="29.8" fill="#161616" textLength="115.8" lengthAdjust="spacingAndGlyphs" >Pete Kriz</text>
<text x="1644.0" y="1364.4" font-size="29.8" fill="#161616" textLength="141.3" lengthAdjust="spacingAndGlyphs" >Consumer</text>
<text x="1835.6000000000001" y="1364.4" font-size="29.8" fill="#161616" textLength="180.7" lengthAdjust="spacingAndGlyphs" >United States</text>
<text x="2038.2" y="1364.4" font-size="29.8" fill="#161616" textLength="120.8" lengthAdjust="spacingAndGlyphs" >Madison</text>
<text x="2325.2" y="1364.4" font-size="29.8" fill="#161616" textLength="138.4" lengthAdjust="spacingAndGlyphs" >Wisconsin</text>
<text x="2827" y="1364.4" font-size="29.8" fill="#161616" text-anchor="end" textLength="81.9" lengthAdjust="spacingAndGlyphs" >53711</text>
<path d="M2857.5 535 L2868 550 H2847 Z" fill="#9c9c9c" stroke="#9c9c9c" stroke-width="2" stroke-linejoin="round"/>
<path d="M2847 1359 H2868 L2857.5 1374 Z" fill="#9c9c9c" stroke="#9c9c9c" stroke-width="2" stroke-linejoin="round"/>
<path d="M1590 521 L1590 552 L1597 545 L1603 558 L1608 556 L1602 543 L1612 543 Z" fill="#fff" stroke="#111" stroke-width="1.5"/>
<g opacity="0.67">
<g fill="none" stroke="#c2c2c2" stroke-width="10" stroke-linejoin="miter">
<path d="M1271.5 1306 V1330 Q1271.5 1346.4 1288 1346.4 H1502"/>
<path d="M1340 1307 V1346"/>
<path d="M1363 1286 V1346"/>
<path d="M1403.5 1314 V1346"/>
<path d="M1438 1318 V1346"/>
<path d="M1497 1286 V1346 M1497 1290.5 H1528"/>
<path d="M1488 1338 V1326 Q1488 1306 1507 1306 Q1526 1306 1526 1326 V1346.4"/>
<path d="M1524 1346.4 H1605.5 V1330 Q1605.5 1308 1580 1307 Q1565 1307 1556 1320"/>
</g>
<g fill="#c2c2c2">
<path d="M1576 1286 L1585.5 1295 L1576 1304 L1566.5 1295 Z"/>
<path d="M1300 1287 L1309 1295 L1300 1303 L1291 1295 Z"/>
<path d="M1319 1287 L1327 1294.5 L1319 1302 L1311 1294.5 Z"/>
</g></g>
</svg>
</body></html>
